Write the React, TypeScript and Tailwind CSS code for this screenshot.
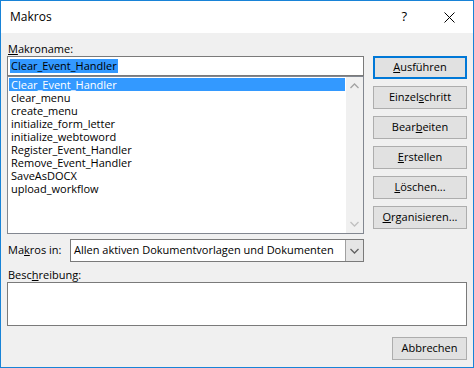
import React from "react";

const items = [
  "Clear_Event_Handler",
  "clear_menu",
  "create_menu",
  "initialize_form_letter",
  "initialize_webtoword",
  "Register_Event_Handler",
  "Remove_Event_Handler",
  "SaveAsDOCX",
  "upload_workflow",
];

function Btn({ children, primary }: { children: React.ReactNode; primary?: boolean }) {
  return (
    <div
      className={
        "h-[23px] flex items-center justify-center bg-[#e1e1e1] " +
        (primary ? "border-2 border-[#0078d7]" : "border border-[#adadad]")
      }
    >
      {children}
    </div>
  );
}

function Chevron({ up, color }: { up?: boolean; color: string }) {
  return (
    <svg width="9" height="6" viewBox="0 0 9 6">
      {up ? (
        <path d="M0.5 5 L4.5 1 L8.5 5" fill="none" stroke={color} strokeWidth="1.3" />
      ) : (
        <path d="M0.5 1 L4.5 5 L8.5 1" fill="none" stroke={color} strokeWidth="1.3" />
      )}
    </svg>
  );
}

export default function App() {
  return (
    <div
      className="w-[474px] h-[368px] border border-[#1883d7] bg-[#f0f0f0] flex flex-col text-[11px] text-black"
      style={{ fontFamily: '"Open Sans", "Noto Sans", sans-serif' }}
    >
      <div className="h-[32px] bg-white flex items-center pl-[9px] shrink-0">
        <span className="text-[12px]">Makros</span>
        <span className="ml-auto mr-[37px] text-[13px]">?</span>
        <svg width="11" height="11" viewBox="0 0 11 11" className="mr-[18px]">
          <path d="M0.5 0.5 L10.5 10.5 M10.5 0.5 L0.5 10.5" stroke="#000" strokeWidth="1" />
        </svg>
      </div>
      <div className="flex-1 px-[6px] pt-[8px] flex flex-col">
        <div className="flex gap-[9px]">
          <div className="w-[357px] flex flex-col">
            <div className="h-[15px] leading-[15px] pl-[1px]">
              <u>M</u>akroname:
            </div>
            <div className="h-[20px] bg-white border border-[#7a7a7a] flex items-center pl-[2px]">
              <span className="bg-[#3399ff] leading-[14px] px-[1px]">Clear_Event_Handler</span>
            </div>
            <div className="h-[158px] bg-white border border-[#828790] flex">
              <div className="flex-1 p-[1px] pt-[1px]">
                {items.map((it, i) => (
                  <div
                    key={it}
                    className={
                      "h-[13px] leading-[13px] pl-[2px] " + (i === 0 ? "bg-[#3399ff] text-white" : "")
                    }
                  >
                    {it}
                  </div>
                ))}
              </div>
              <div className="w-[17px] bg-[#f0f0f0] flex flex-col items-center justify-between py-[6px]">
                <Chevron up color="#a3a3a3" />
                <Chevron color="#c0c0c0" />
              </div>
            </div>
            <div className="mt-[5px] flex items-center">
              <div className="w-[63px] pl-[1px]">
                Ma<u>k</u>ros in:
              </div>
              <div className="flex-1 h-[23px] bg-white border border-[#7a7a7a] flex">
                <div className="flex-1 flex items-center pl-[3px]">
                  Allen aktiven Dokumentvorlagen und Dokumenten
                </div>
                <div className="w-[18px] bg-[#e5e5e5] border-l border-[#a0a0a0] flex items-center justify-center">
                  <Chevron color="#606060" />
                </div>
              </div>
            </div>
          </div>
          <div className="w-[94px] flex flex-col gap-[7px] pt-[15px]">
            <Btn primary>
              <span>
                <u>A</u>usführen
              </span>
            </Btn>
            <Btn>
              <span>
                Einzel<u>s</u>chritt
              </span>
            </Btn>
            <Btn>
              <span>
                Bear<u>b</u>eiten
              </span>
            </Btn>
            <Btn>
              <span>
                <u>E</u>rstellen
              </span>
            </Btn>
            <Btn>
              <span>
                <u>L</u>öschen...
              </span>
            </Btn>
            <Btn>
              <span>
                <u>O</u>rganisieren...
              </span>
            </Btn>
          </div>
        </div>
        <div className="mt-[5px] h-[15px] leading-[15px] pl-[1px]">
          Besc<u>h</u>reibung:
        </div>
        <div className="h-[44px] bg-white border border-[#7a7a7a]" />
        <div className="mt-[11px] flex justify-end">
          <div className="w-[75px]">
            <Btn>Abbrechen</Btn>
          </div>
        </div>
      </div>
    </div>
  );
}
